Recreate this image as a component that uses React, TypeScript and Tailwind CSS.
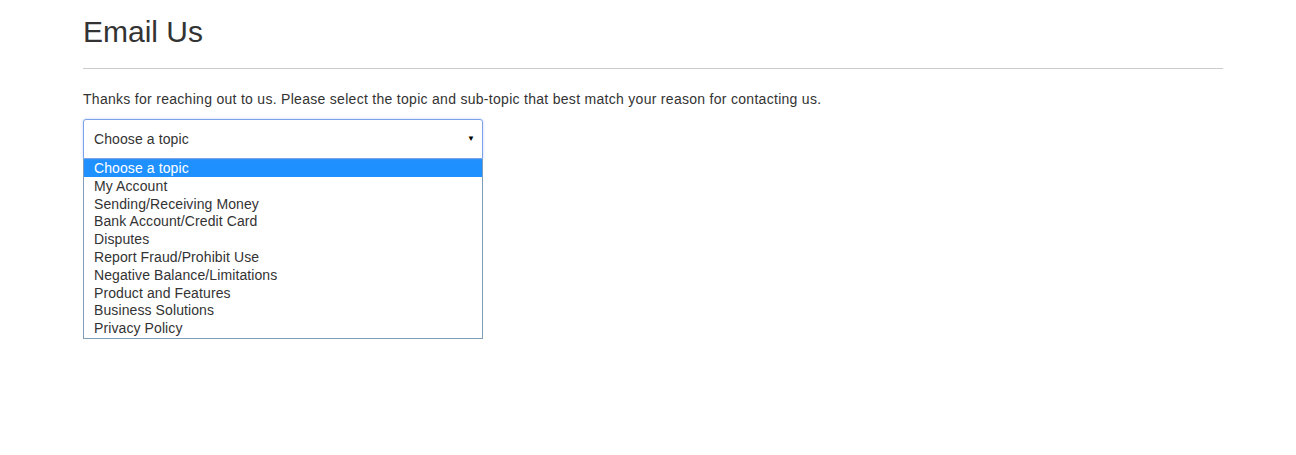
import React from "react";

const options = [
  "Choose a topic",
  "My Account",
  "Sending/Receiving Money",
  "Bank Account/Credit Card",
  "Disputes",
  "Report Fraud/Prohibit Use",
  "Negative Balance/Limitations",
  "Product and Features",
  "Business Solutions",
  "Privacy Policy",
];

export default function App() {
  return (
    <div
      className="w-[1296px] h-[455px] bg-white text-[#333333]"
      style={{ fontFamily: '"Liberation Sans", Arial, sans-serif' }}
    >
      <div className="mx-[83px] w-[1140px]">
        <h2 className="pt-[15px] text-[30px] leading-[33px] font-normal">Email Us</h2>
        <div className="mt-[20px] h-px bg-[#cccccc]" />
        <p className="mt-[20px] text-[14px] leading-[20px] tracking-[0.29px]">
          Thanks for reaching out to us. Please select the topic and sub-topic that best match your reason for contacting us.
        </p>
        <div className="mt-[10px] w-[400px]">
          <div className="relative flex h-[40px] items-center rounded-t-[3px] border border-[#7ca1e8] bg-white pl-[10px] text-[14px] tracking-[0.1px] shadow-[0_0_3px_rgba(124,161,232,0.45)]">
            <span>Choose a topic</span>
            <span className="absolute right-[7px] top-[14px] text-[8px] leading-[10px] text-black">▼</span>
          </div>
          <div className="border border-t-0 border-[#7f9db9] bg-white pb-[1px]">
            {options.map((o, i) => (
              <div
                key={o}
                className={`h-[17.8px] pl-[10px] pt-[1px] text-[14px] leading-[17px] tracking-[0.1px] ${
                  i === 0 ? "bg-[#1e90ff] text-white" : "text-[#333333]"
                }`}
              >
                {o}
              </div>
            ))}
          </div>
        </div>
      </div>
    </div>
  );
}
